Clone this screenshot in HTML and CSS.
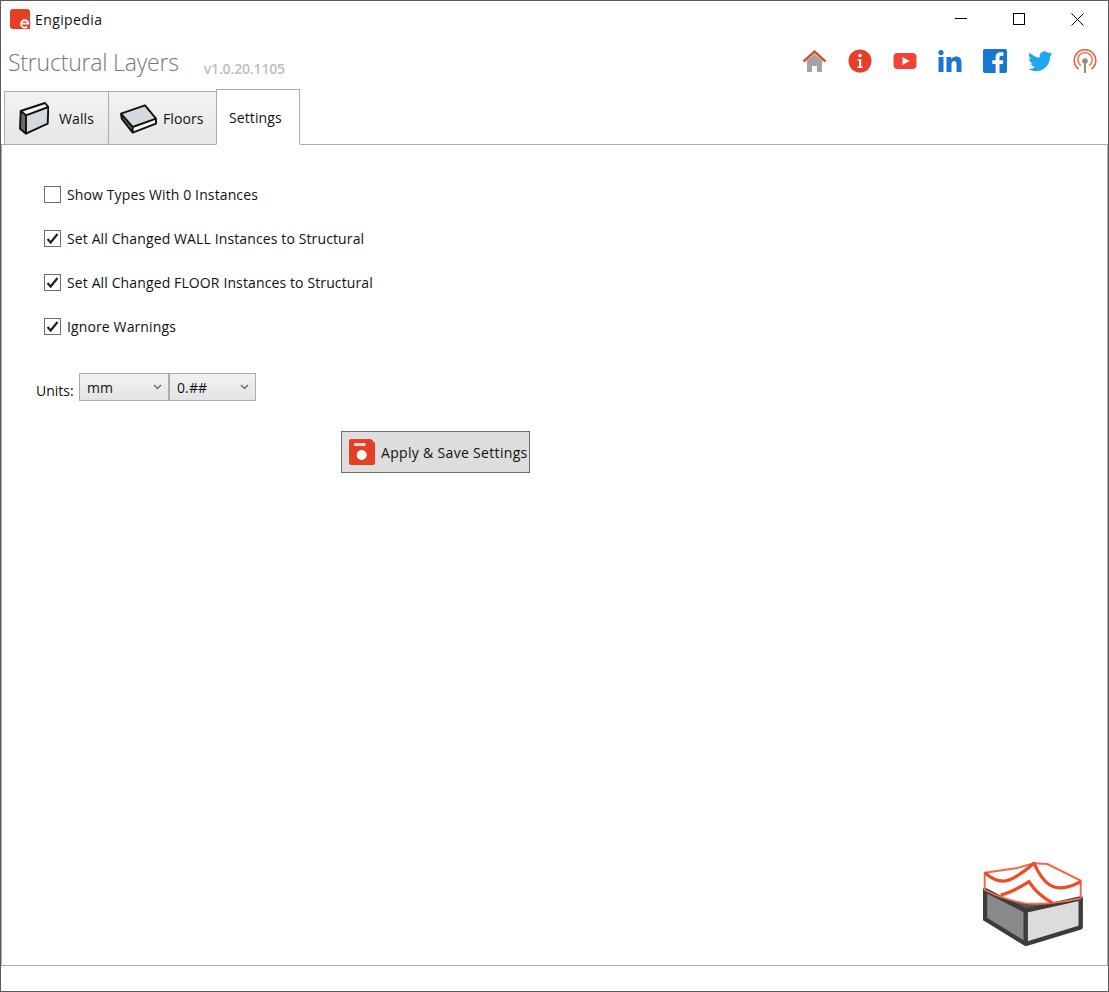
FILE: index.html
```html
<!DOCTYPE html>
<html lang="en">
<head>
<meta charset="utf-8">
<title>Engipedia - Structural Layers</title>
<link rel="stylesheet" href="styles.css">
</head>
<body>
<div class="window">
  <div class="titlebar">
    <svg class="app-icon" width="20" height="21" viewBox="0 0 20 21"><path d="M3 0h14a3 3 0 0 1 3 3v17H3a3 3 0 0 1-3-3V3a3 3 0 0 1 3-3z" fill="#e53f26"/><circle cx="15" cy="14.500" r="5.500" fill="#e53f26"/><path d="M11.200 14.600h7.200a3.700 3.700 0 1 0-1.100 3" fill="none" stroke="#fff" stroke-width="1.800"/></svg>
    <span class="app-name">Engipedia</span>
    <div class="win-controls">
      <svg width="13" height="13" viewBox="0 0 13 13"><path d="M0 5.500h12" stroke="#000" fill="none"/></svg>
      <svg width="13" height="13" viewBox="0 0 13 13"><rect x="0.500" y="0.500" width="11" height="11" stroke="#000" fill="none"/></svg>
      <svg width="13" height="13" viewBox="0 0 13 13"><path d="M0.500 0.500l12 12M12.500 0.500l-12 12" stroke="#000" fill="none"/></svg>
    </div>
  </div>
  <div class="header">
    <span class="app-title">Structural Layers</span>
    <span class="version">v1.0.20.1105</span>
    <div class="links">
      <svg width="25" height="24" viewBox="0 0 25 24"><path d="M5 11.500L12.500 5 20 11.500V23h-5v-6h-5v6H5z" fill="#a3a3a3"/><path d="M1.500 12.500L12.500 2.500l11 10" fill="none" stroke="#e0492c" stroke-width="2.400"/></svg>
      <svg width="24" height="24" viewBox="0 0 24 24"><circle cx="12" cy="12" r="11.500" fill="#e53f26"/><circle cx="12" cy="6.500" r="1.800" fill="#fff"/><path d="M9.500 10.200h3.700v7.300h1.500v1.500H9.500v-1.500H11v-5.800H9.500z" fill="#fff"/></svg>
      <svg width="24" height="24" viewBox="0 0 24 24"><rect x="0.500" y="4" width="23" height="16" rx="4" fill="#f44336"/><path d="M9.500 8l7 4-7 4z" fill="#fff"/></svg>
      <svg width="24" height="24" viewBox="0 0 24 24"><circle cx="3" cy="3.500" r="2.600" fill="#1976d2"/><path d="M0.500 8h5v15h-5zM8.500 8h4.800v2.200c1-1.600 2.600-2.600 4.700-2.600 4.200 0 5.500 2.700 5.500 6.600V23h-5v-7.800c0-2-.5-3.300-2.200-3.300-1.900 0-2.800 1.400-2.800 3.400V23h-5z" fill="#1976d2"/></svg>
      <svg width="24" height="24" viewBox="0 0 24 24"><path d="M2 0h20a2 2 0 0 1 2 2v20a2 2 0 0 1-2 2h-5.500v-9h3.300l.5-3.800h-3.800V8.700c0-1.100.4-1.900 1.900-1.900h2V3.400c-.4 0-1.600-.2-2.900-.2-2.900 0-4.900 1.800-4.900 5v3H9.300V15h3.300v9H2a2 2 0 0 1-2-2V2a2 2 0 0 1 2-2z" fill="#1976d2"/></svg>
      <svg width="24" height="24" viewBox="0 0 24 24"><path d="M24 4.800c-.9.400-1.800.7-2.800.8 1-.6 1.800-1.600 2.100-2.700-.9.600-2 1-3.100 1.200A4.900 4.900 0 0 0 11.800 8.600c-4.100-.2-7.700-2.100-10.100-5.100-1.400 2.300-.7 5.200 1.500 6.600-.8 0-1.500-.2-2.200-.6 0 2.400 1.700 4.400 3.900 4.900-.7.200-1.500.2-2.200.1.600 2 2.400 3.400 4.600 3.400A9.900 9.900 0 0 1 .5 20c2.200 1.400 4.800 2.200 7.500 2.200 9.100 0 14.300-7.700 14-14.600 1-.7 1.800-1.600 2-2.800z" fill="#1fa5f2"/></svg>
      <svg width="24" height="24" viewBox="0 0 24 24" fill="none"><path d="M5.500 20a10.800 10.800 0 1 1 13 0" stroke="#e8623e" stroke-width="1.600"/><path d="M7.800 16.500a7.200 7.200 0 1 1 8.400 0" stroke="#ed7b55" stroke-width="1.600"/><circle cx="12" cy="12" r="2.800" fill="#8e8e8e"/><path d="M12 13v11" stroke="#8e8e8e" stroke-width="2"/></svg>
    </div>
  </div>
  <div class="tabs">
    <div class="tab">
      <svg width="30" height="33" viewBox="0 0 30 33"><path d="M1.700 9L26 1l3.300 4L7 13.300z" fill="#f6f6f6"/><path d="M7 13.300L29.300 5l-.6 16.700L7 31.700z" fill="#d2d9e0"/><path d="M1.700 9L7 13.300v18.400L1 26.700z" fill="#6a6a6a"/><path d="M1.700 9L26 1l3.300 4-.6 16.700L7 31.700l-6-5zM7 13.300L29.300 5M7 13.300v18.400M1.700 9L7 13.300" fill="none" stroke="#111" stroke-width="1.900" stroke-linejoin="round"/></svg>
      <span>Walls</span>
    </div>
    <div class="tab tab-floors">
      <svg width="37" height="32" viewBox="0 0 37 32"><path d="M1 11.700L25 3.300l11 13.400-23.300 8.300z" fill="#d2d9e0"/><path d="M12.700 25L36 16.700v5l-23.300 9z" fill="#f6f6f6"/><path d="M1 11.700L12.700 25v5.700L1.700 16.700z" fill="#6a6a6a"/><path d="M1 11.700L25 3.300l11 13.400v5l-23.300 9-11-14zM1 11.700L12.700 25 36 16.700M12.700 25v5.700" fill="none" stroke="#111" stroke-width="1.900" stroke-linejoin="round"/></svg>
      <span>Floors</span>
    </div>
    <div class="tab tab-active"><span>Settings</span></div>
  </div>
  <div class="panel">
    <div class="options">
      <div class="option"><span class="check"></span><span>Show Types With 0 Instances</span></div>
      <div class="option"><span class="check"><svg width="15" height="15" viewBox="0 0 15 15"><path d="M2.500 8l3.200 3.500L12.500 3" fill="none" stroke="#222" stroke-width="2.200"/></svg></span><span>Set All Changed WALL Instances to Structural</span></div>
      <div class="option"><span class="check"><svg width="15" height="15" viewBox="0 0 15 15"><path d="M2.500 8l3.200 3.500L12.500 3" fill="none" stroke="#222" stroke-width="2.200"/></svg></span><span>Set All Changed FLOOR Instances to Structural</span></div>
      <div class="option"><span class="check"><svg width="15" height="15" viewBox="0 0 15 15"><path d="M2.500 8l3.200 3.500L12.500 3" fill="none" stroke="#222" stroke-width="2.200"/></svg></span><span>Ignore Warnings</span></div>
    </div>
    <div class="units">
      <span class="units-label">Units:</span>
      <div class="select select-unit"><span>mm</span><svg width="9" height="6" viewBox="0 0 9 6"><path d="M1 1l3.500 3.500L8 1" fill="none" stroke="#555" stroke-width="1.100"/></svg></div>
      <div class="select select-format"><span>0.##</span><svg width="9" height="6" viewBox="0 0 9 6"><path d="M1 1l3.500 3.500L8 1" fill="none" stroke="#555" stroke-width="1.100"/></svg></div>
    </div>
    <div class="save-row">
      <div class="save-btn">
        <svg width="26" height="26" viewBox="0 0 26 26"><path d="M2 0h20l4 4v20a2 2 0 0 1-2 2H2a2 2 0 0 1-2-2V2a2 2 0 0 1 2-2z" fill="#e53f26"/><rect x="5" y="4" width="11.500" height="3" fill="#f8d8d0"/><circle cx="12.700" cy="16" r="5" fill="#fff"/></svg>
        <span>Apply &amp; Save Settings</span>
      </div>
    </div>
    <svg class="brand" width="100" height="84" viewBox="0 0 100 84">
      <path d="M1.700 10.700L51 1.300 64.300 2 97.700 18.700V36.300L69 42 42.700 48.700 1.700 28z" fill="#fff"/>
      <path d="M2 29L42.700 48.700V82L2 57z" fill="#8a8a8a"/>
      <path d="M42.700 48.700L97.700 36.300v29L42.700 82z" fill="#dcdcdc"/>
      <path d="M2 28C12 33 22 37 35 40L42.700 41.500C60 43 80 40 97.700 36.300L42.700 48.700z" fill="#555"/>
      <path d="M2 28L42.700 48.700 97.700 36.300v29L42.700 82 2 57zM42.700 48.700V82" fill="none" stroke="#3c3c3c" stroke-width="4.400" stroke-linejoin="round"/>
      <path d="M1.700 28C14 34 28 39 42.700 41.300 60 43 80 40 97.700 36.300" fill="none" stroke="#f4704c" stroke-width="1.800"/>
      <path d="M1.700 28V10.700L32.700 6.300 51 1.300 64.300 2 97.700 18.700V36.300" fill="none" stroke="#f4684a" stroke-width="2" stroke-linejoin="round"/>
      <path d="M1.700 10.700C8 16 14 20 22 19 32 17 42 9 51 1.300 54 8 58 17 66 22.500 76 29 88 25 97.700 19.700" fill="none" stroke="#ee4b26" stroke-width="3.200"/>
      <path d="M17.700 33C26 31 36 26 46 19.700 50 26 56 34 69.300 40.700" fill="none" stroke="#ee4b26" stroke-width="3.200"/>
    </svg>
  </div>
  <div class="statusbar"></div>
</div>
</body>
</html>
```
FILE: styles.css
```css
* { box-sizing: border-box; }
html, body { margin: 0; padding: 0; height: 100%; background: #fff; overflow: hidden; }
body { font-family: "Open Sans", "Noto Sans", sans-serif; color: #111; }
.window { width: 1109px; height: 992px; display: flex; flex-direction: column; border: 1px solid #5a5a5a; background: #fff; }
.titlebar { height: 38px; flex: none; display: flex; align-items: center; padding-left: 9px; }
.app-icon { overflow: visible; margin-bottom: 1px; }
.app-name { margin-left: 5px; margin-bottom: 1px; font-size: 14px; letter-spacing: 0.4px; }
.win-controls { margin-left: auto; display: flex; gap: 45px; padding: 0 24px 1px 0; }
.header { height: 50px; flex: none; display: flex; align-items: flex-start; padding: 5px 0 0 7px; }
.app-title { font-size: 23px; font-weight: 300; color: #6e7a80; line-height: 36px; letter-spacing: -0.2px; }
.version { margin-left: 25px; margin-top: 15px; font-size: 14px; font-weight: 600; color: #bdbdbd; line-height: 20px; letter-spacing: -0.15px; }
.links { margin-left: auto; display: flex; gap: 21px; padding: 5px 11px 0 0; }
.tabs { height: 56px; flex: none; display: flex; align-items: flex-end; padding-left: 3px; margin-bottom: -1px; position: relative; z-index: 1; }
.tab { height: 54px; width: 105px; display: flex; align-items: center; gap: 10px; padding-left: 14px; background: linear-gradient(#f3f3f3, #e6e6e6); border: 1px solid #acacac; font-size: 14px; letter-spacing: 0.1px; }
.tab-floors { width: 109px; margin-left: -1px; padding-left: 11px; gap: 6px; }
.tab-active { width: 84px; height: 56px; margin-left: -1px; padding: 0 0 0 12px; background: #fff; border-bottom-color: #fff; }
.panel { flex: 1; display: flex; flex-direction: column; border: 1px solid #acacac; padding: 38px 0 0 0; min-height: 0; }
.options { display: flex; flex-direction: column; gap: 22px; padding-left: 42px; }
.option { height: 22px; display: flex; align-items: center; gap: 6px; font-size: 14px; letter-spacing: 0.12px; }
.check { width: 17px; height: 17px; flex: none; border: 1px solid #6e6e6e; background: #fff; display: flex; align-items: center; justify-content: center; }
.units { display: flex; margin-top: 36px; padding-left: 34px; align-items: flex-start; }
.units-label { width: 43px; flex: none; font-size: 14px; letter-spacing: 0; margin-top: 7px; line-height: 22px; }
.select { height: 28px; display: flex; align-items: center; justify-content: space-between; padding: 0 6px 0 7px; background: linear-gradient(#f1f1f1, #e4e4e4); border: 1px solid #acacac; font-size: 14px; letter-spacing: 0.1px; }
.select-unit { width: 90px; }
.select-format { width: 87px; }
.save-row { margin-top: 29px; padding-left: 339px; }
.save-btn { width: 189px; height: 42px; display: flex; align-items: center; gap: 6px; padding-left: 7px; background: #dddddd; border: 1px solid #707070; font-size: 14px; letter-spacing: 0.32px; white-space: nowrap; }
.brand { margin-top: auto; align-self: flex-end; margin-right: 24px; margin-bottom: 19px; }
.statusbar { height: 25px; flex: none; }
```
